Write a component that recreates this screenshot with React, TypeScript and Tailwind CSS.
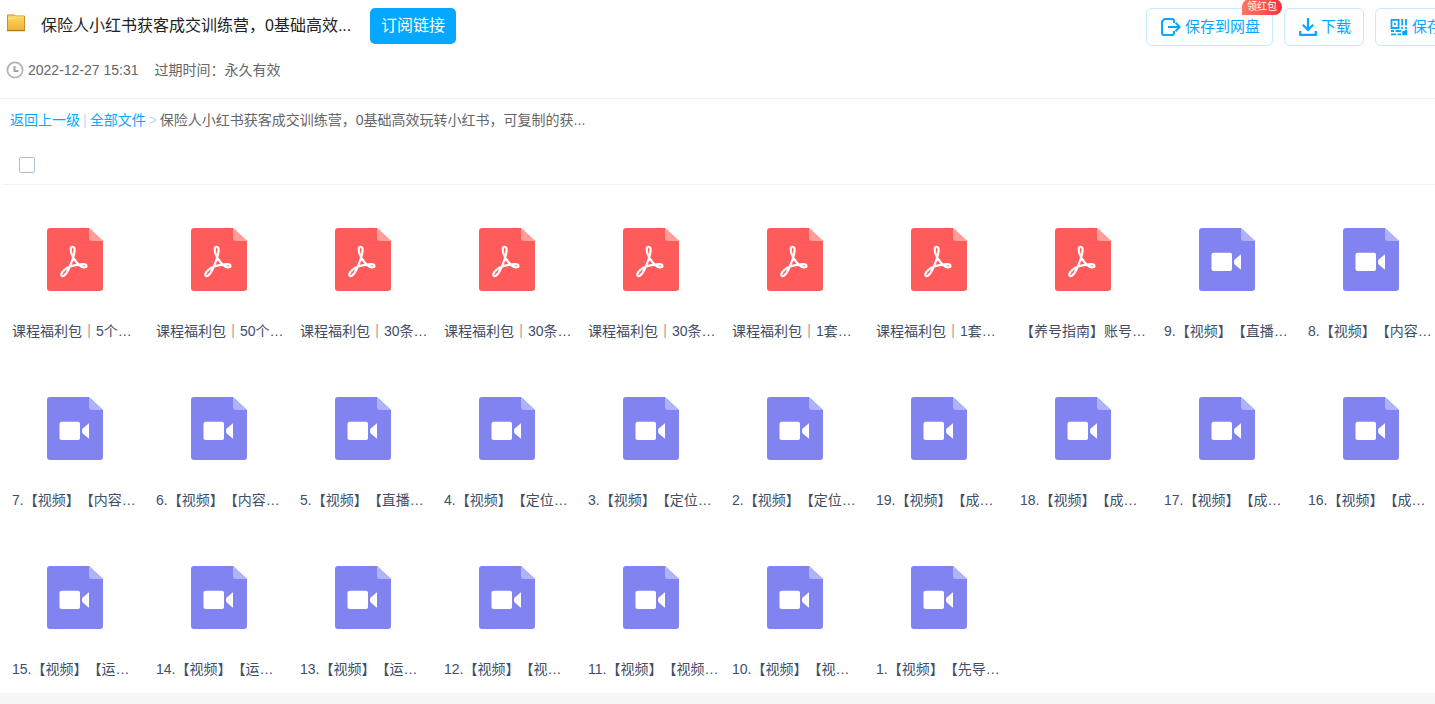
import React from "react";

type Kind = "pdf" | "video";
type FileEntry = { kind: Kind; name: string };

const files: FileEntry[] = [
  { kind: "pdf", name: "课程福利包｜5个…" },
  { kind: "pdf", name: "课程福利包｜50个…" },
  { kind: "pdf", name: "课程福利包｜30条…" },
  { kind: "pdf", name: "课程福利包｜30条…" },
  { kind: "pdf", name: "课程福利包｜30条…" },
  { kind: "pdf", name: "课程福利包｜1套…" },
  { kind: "pdf", name: "课程福利包｜1套…" },
  { kind: "pdf", name: "【养号指南】账号…" },
  { kind: "video", name: "9.【视频】【直播…" },
  { kind: "video", name: "8.【视频】【内容…" },
  { kind: "video", name: "7.【视频】【内容…" },
  { kind: "video", name: "6.【视频】【内容…" },
  { kind: "video", name: "5.【视频】【直播…" },
  { kind: "video", name: "4.【视频】【定位…" },
  { kind: "video", name: "3.【视频】【定位…" },
  { kind: "video", name: "2.【视频】【定位…" },
  { kind: "video", name: "19.【视频】【成…" },
  { kind: "video", name: "18.【视频】【成…" },
  { kind: "video", name: "17.【视频】【成…" },
  { kind: "video", name: "16.【视频】【成…" },
  { kind: "video", name: "15.【视频】【运…" },
  { kind: "video", name: "14.【视频】【运…" },
  { kind: "video", name: "13.【视频】【运…" },
  { kind: "video", name: "12.【视频】【视…" },
  { kind: "video", name: "11.【视频】【视频…" },
  { kind: "video", name: "10.【视频】【视…" },
  { kind: "video", name: "1.【视频】【先导…" },
];

function FileIcon({ kind }: { kind: Kind }) {
  const pdf = kind === "pdf";
  return (
    <svg viewBox="0 0 56 63" className="h-[63px] w-14" aria-hidden="true">
      <path
        d="M3 0H42L56 13V60A3 3 0 0 1 53 63H3A3 3 0 0 1 0 60V3A3 3 0 0 1 3 0Z"
        fill={pdf ? "#ff5b5b" : "#8183f1"}
      />
      <path d="M42 0L56 13H45A3 3 0 0 1 42 10Z" fill={pdf ? "#ff9c9c" : "#b1b2ff"} />
      {pdf ? (
        <path
          d="M25.5 18.8C23 18.8 23.4 23 25 26.8C27.2 32 32 38.4 36.5 39.4C40.6 40 40.4 36.2 36.2 36.2C30 36.5 23.5 38.2 20 40C16.5 42 13.4 46 14.6 47.6C16.2 49.4 19 46.4 21.2 42C24 36 27.7 25.5 27.6 21.8C27.6 19.7 26.9 18.8 25.5 18.8Z"
          fill="none"
          stroke="#fff"
          strokeWidth="2.2"
          strokeLinejoin="round"
        />
      ) : (
        <>
          <rect x="12.5" y="24.7" width="20.5" height="18.3" rx="2" fill="#fff" />
          <path d="M42 26.3V41.7L36 36.8C34.6 35.4 34.6 32.6 36 31.2Z" fill="#fff" />
        </>
      )}
    </svg>
  );
}

function FolderIcon() {
  return (
    <svg viewBox="0 0 18 18" className="h-[18px] w-[18px]" aria-hidden="true">
      <defs>
        <linearGradient id="folder" x1="0" y1="0" x2="0" y2="1">
          <stop offset="0" stopColor="#fbd968" />
          <stop offset="1" stopColor="#f0b032" />
        </linearGradient>
      </defs>
      <path d="M0.5 1H7.5L8.5 2H17.5V16.5H0.5Z" fill="url(#folder)" stroke="#c98f1f" />
      <path d="M1 4.5H7L8 3H17" fill="none" stroke="#ffe58a" />
      <path d="M0 16.7H18" stroke="#a87412" />
    </svg>
  );
}

function ClockIcon() {
  return (
    <svg viewBox="0 0 18 18" className="h-[18px] w-[18px]" fill="none" aria-hidden="true">
      <circle cx="9" cy="9" r="7.6" stroke="#b3b3b3" strokeWidth="1.8" />
      <path d="M8.5 5V10H12.5" stroke="#a3a3a3" strokeWidth="2" />
    </svg>
  );
}

function SaveIcon() {
  return (
    <svg viewBox="0 0 20 18" className="h-[18px] w-5" fill="none" stroke="#06a7ff" strokeWidth="2" aria-hidden="true">
      <path d="M13 5V3A2 2 0 0 0 11 1H3.5L1 3.5V15A2 2 0 0 0 3 17H11A2 2 0 0 0 13 15V13" />
      <path d="M7 9H18.5M14.5 4.8L18.7 9L14.5 13.2" />
    </svg>
  );
}

function DownloadIcon() {
  return (
    <svg viewBox="0 0 18 18" className="h-[18px] w-[18px]" fill="none" stroke="#06a7ff" strokeWidth="2.2" aria-hidden="true">
      <path d="M9 0V11.5M3.8 6.8L9 12L14.2 6.8" />
      <path d="M1.2 13V16.8H16.8V13" />
    </svg>
  );
}

function QrIcon() {
  return (
    <svg viewBox="0 0 18 18" className="h-[18px] w-[18px]" aria-hidden="true">
      <g fill="none" stroke="#06a7ff" strokeWidth="1.8">
        <path d="M1.5 1.9H8.6V10H1.5Z" />
        <path d="M12.2 1V7.5M16 1V7.5M5 4.8V7.2M12.2 9V10.9M16 9V10.9" />
        <path d="M1 13H4M5.5 13H11M1 16.4H6M7.5 16.4H11" />
      </g>
      <path d="M12.3 13H14.8V11.8H17.3V17.3H12.3Z" fill="#06a7ff" />
    </svg>
  );
}

function ActionButton({ icon, label, badge }: { icon: React.ReactNode; label: string; badge?: string }) {
  return (
    <button
      type="button"
      className="relative flex h-[38px] items-center gap-1 rounded-md border border-[#c4ebff] bg-white pr-3 pl-3.5 text-[15px] text-[#06a7ff]"
    >
      {icon}
      <span>{label}</span>
      {badge && (
        <span className="absolute -top-2.5 -right-2.5 flex h-4 w-10 items-center justify-center rounded-tl-lg rounded-r-lg bg-linear-to-r from-[#ff7461] to-[#ff2b3d] text-[10px] text-white">
          {badge}
        </span>
      )}
    </button>
  );
}

export default function App() {
  return (
    <div
      lang="zh-CN"
      className="min-h-screen overflow-x-hidden bg-[#f7f7f7] font-['Liberation_Sans','Noto_Sans_CJK_SC',sans-serif] text-sm text-[#666] [text-spacing-trim:space-all]"
    >
      <div className="min-w-[1500px] bg-white pb-3.5">
        <header className="border-b border-[#f2f2f2] pt-2 pb-[18px]">
          <div className="flex items-start justify-between">
            <div className="flex h-9 items-center pl-[7px]">
              <div className="mb-1.5">
                <FolderIcon />
              </div>
              <h1 className="ml-4 w-[312px] text-base whitespace-nowrap text-[#222]">
                保险人小红书获客成交训练营，0基础高效...
              </h1>
              <button type="button" className="ml-[17px] h-9 rounded-[5px] bg-[#06a7ff] px-[11px] text-base text-white">
                订阅链接
              </button>
            </div>
            <div className="flex gap-[11px]">
              <ActionButton icon={<SaveIcon />} label="保存到网盘" badge="领红包" />
              <ActionButton icon={<DownloadIcon />} label="下载" />
              <ActionButton icon={<QrIcon />} label="保存到手机" />
            </div>
          </div>
          <div className="mt-3.5 flex h-5 items-center pl-1.5">
            <ClockIcon />
            <time className="ml-1">2022-12-27 15:31</time>
            <span className="ml-4">过期时间：永久有效</span>
          </div>
        </header>

        <nav className="flex h-[42px] items-center gap-[3px] pl-2.5">
          <a href="#up" className="text-[#06a7ff]">返回上一级</a>
          <span className="text-[#c4d8f0]">|</span>
          <a href="#all" className="text-[#06a7ff]">全部文件</a>
          <span className="text-[#c4d8f0]">&gt;</span>
          <span>保险人小红书获客成交训练营，0基础高效玩转小红书，可复制的获...</span>
        </nav>

        <div className="mt-1 ml-0.5 flex h-10 items-center border-b border-[#f2f2f2] pl-[17px]">
          <input
            type="checkbox"
            aria-label="全选"
            className="h-4 w-4 appearance-none rounded-xs border border-[#afbfcf] bg-white checked:bg-[#06a7ff]"
          />
        </div>

        <ul className="ml-[3px] grid grid-cols-[repeat(auto-fill,144px)] gap-y-7 pt-[15px]">
          {files.map((file, i) => (
            <li key={i} className="flex flex-col items-center pt-7">
              <FileIcon kind={file.kind} />
              <a href={"#file-" + i} className="mt-[30px] w-full pl-[9px] leading-5 whitespace-nowrap text-[#424e67]">
                {file.name}
              </a>
            </li>
          ))}
        </ul>
      </div>
    </div>
  );
}
